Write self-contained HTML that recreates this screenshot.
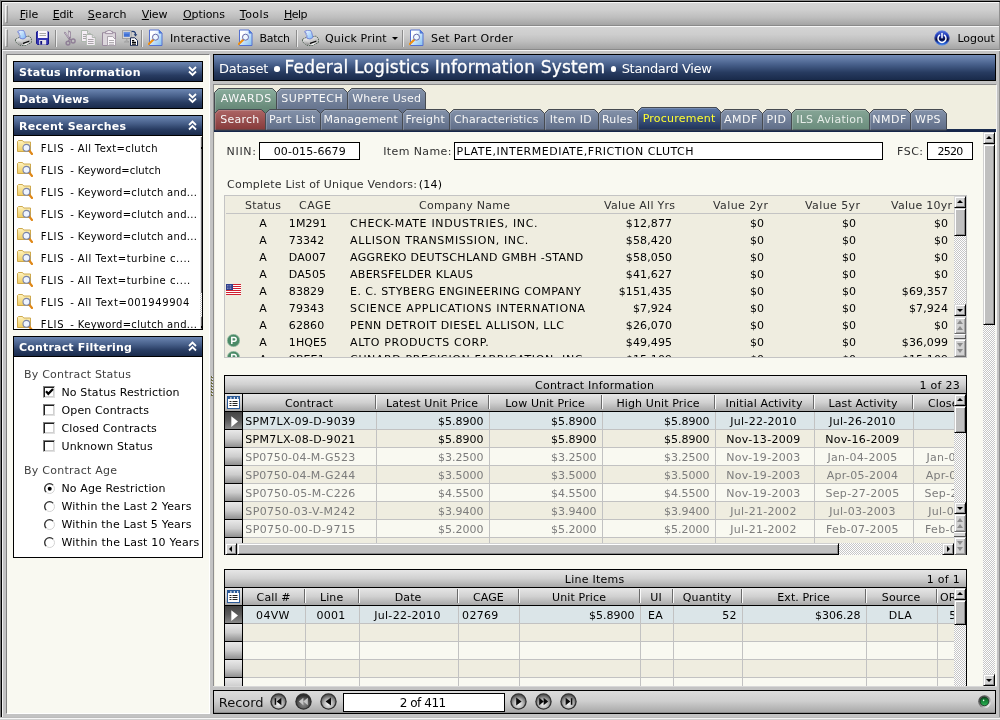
<!DOCTYPE html>
<html><head><meta charset="utf-8"><title>Federal Logistics Information System</title>
<style>

*{box-sizing:border-box;margin:0;padding:0}
html,body{width:1000px;height:720px;overflow:hidden;background:#b9b9b9}
body{font-family:"DejaVu Sans","Liberation Sans",sans-serif;font-size:11px;color:#000;position:relative}
#app,#app div,#app span.t,#app svg{position:absolute}
#app{left:0;top:0;width:1000px;height:720px;overflow:hidden;will-change:transform}
#app span.t{white-space:pre;line-height:1;display:block}
#app div{overflow:hidden}
u{text-decoration:underline;text-underline-offset:1px}
.bar{background:linear-gradient(#d4d4d4,#cdcdcd 35%,#bebebe 65%,#a4a4a4)}
.grip{border-left:1px solid #f2f2f2;border-top:1px solid #f2f2f2;border-right:1px solid #8e8e8e;border-bottom:1px solid #8e8e8e}
.tsep{border-left:1px solid #8c8c8c;border-right:1px solid #ececec}
.ph{border:1px solid #000;background:linear-gradient(#6c86b2,#465e88 40%,#283c62 70%,#1a2b4c)}
.pb{background:#fff;border:1px solid #000;border-top:none}
.nav{border:1px solid #000;background:linear-gradient(#748db8,#455d88 40%,#273b60 70%,#192a4a)}
.dots{background:repeating-conic-gradient(#ffffff 0 25%,#c6c6c6 0 50%) 0 0/2px 2px}
.sbtn{background:#d2d2d2;border-left:1px solid #d8d8d8;border-top:1px solid #d8d8d8;border-right:1px solid #000;border-bottom:1px solid #000;box-shadow:inset 1px 1px 0 #fff,inset -1px -1px 0 #8a8a8a}
.sbtnd{background:#d2d2d2;border-left:1px solid #dcdcdc;border-top:1px solid #dcdcdc;border-right:1px solid #6c6c6c;border-bottom:1px solid #6c6c6c;box-shadow:inset 1px 1px 0 #fff,inset -1px -1px 0 #a4a4a4}
.sthumb{background:#c0c0c0;border-left:1px solid #d0d0d0;border-top:1px solid #d0d0d0;border-right:1px solid #000;border-bottom:1px solid #000;box-shadow:inset 1px 1px 0 #fff,inset -1px -1px 0 #8a8a8a}
.inp{background:#fff;border:1px solid #000}
.ghead{background:linear-gradient(#e6e6e6,#d0d0d0 50%,#a8a8a8)}
.gsel{background:linear-gradient(#e9e9e9,#cdcdcd 50%,#909090)}
.gselx{background:linear-gradient(#444,#5c5c5c 50%,#8a8a8a)}

</style></head><body><div id="app">
<div style="left:0px;top:0px;width:1000px;height:720px;background:#b4b4b4"></div>
<div style="left:0px;top:0px;width:1000px;height:1px;background:#8c8c8c"></div>
<div style="left:0px;top:0px;width:1px;height:720px;background:#7c7c7c"></div>
<div style="left:1px;top:1px;width:999px;height:719px;background:#c3c3c3;border-left:1px solid #000;border-top:1px solid #000"></div>
<div class="bar" style="left:2px;top:2px;width:998px;height:24px;border-top:1px solid #f6f6f6;border-bottom:1px solid #8a8a8a;border-left:1px solid #f0f0f0"></div>
<div class="grip" style="left:5px;top:5px;width:3px;height:18px;"></div>
<span class="t" style="top:9px;left:19.8px;letter-spacing:0.03px;"><u>F</u>ile</span>
<span class="t" style="top:9px;left:52.8px;letter-spacing:-0.27px;"><u>E</u>dit</span>
<span class="t" style="top:9px;left:87.8px;letter-spacing:0.18px;"><u>S</u>earch</span>
<span class="t" style="top:9px;left:141.8px;letter-spacing:-0.14px;"><u>V</u>iew</span>
<span class="t" style="top:9px;left:183.0px;letter-spacing:-0.08px;"><u>O</u>ptions</span>
<span class="t" style="top:9px;left:239.8px;letter-spacing:0.47px;"><u>T</u>ools</span>
<span class="t" style="top:9px;left:284.0px;letter-spacing:-0.53px;"><u>H</u>elp</span>
<div class="bar" style="left:2px;top:26px;width:998px;height:24px;border-top:1px solid #f6f6f6;border-bottom:1px solid #8a8a8a;border-left:1px solid #f0f0f0"></div>
<div class="grip" style="left:5px;top:29px;width:3px;height:18px;"></div>
<div class="tsep" style="left:55px;top:30px;width:2px;height:17px;"></div>
<div class="tsep" style="left:141px;top:30px;width:2px;height:17px;"></div>
<div class="tsep" style="left:296px;top:30px;width:2px;height:17px;"></div>
<div class="tsep" style="left:402px;top:30px;width:2px;height:17px;"></div>
<span class="t" style="top:33px;left:170.0px;letter-spacing:0.12px;">Interactive</span>
<span class="t" style="top:33px;left:259.5px;letter-spacing:-0.31px;">Batch</span>
<span class="t" style="top:33px;left:325.0px;letter-spacing:0.17px;">Quick Print</span>
<span class="t" style="top:33px;left:431.0px;letter-spacing:0.31px;">Set Part Order</span>
<span class="t" style="top:33px;left:957.5px;letter-spacing:-0.07px;">Logout</span>
<div style="left:392px;top:37px;width:6px;height:3px;"><svg width="6" height="3" viewBox="0 0 6 3"><path d="M0 0h6L3 3z" fill="#000"/></svg></div>
<div style="left:999px;top:2px;width:1px;height:715px;background:#909090"></div>
<div style="left:2px;top:50px;width:998px;height:1px;background:#f6f6f6"></div>
<div style="left:2px;top:51px;width:1px;height:666px;background:#f2f2f2"></div>
<div style="left:6px;top:54px;width:204px;height:660px;background:#f9f9f1;border-top:1px solid #808080;border-left:1px solid #808080;border-right:1px solid #fff;border-bottom:1px solid #fff"></div>
<div class="ph" style="left:13px;top:61px;width:190px;height:21px;"></div>
<span class="t" style="top:67px;left:19.0px;letter-spacing:0.26px;color:#fff;font-weight:bold;">Status Information</span>
<svg style="left:188px;top:66px" width="9" height="11" viewBox="0 0 9 11"><path d="M1 1l3.5 3.5L8 1M1 5.5L4.5 9 8 5.5" fill="none" stroke="#fff" stroke-width="1.8"/></svg>
<div class="ph" style="left:13px;top:88px;width:190px;height:21px;"></div>
<span class="t" style="top:94px;left:19.0px;letter-spacing:0.07px;color:#fff;font-weight:bold;">Data Views</span>
<svg style="left:188px;top:93px" width="9" height="11" viewBox="0 0 9 11"><path d="M1 1l3.5 3.5L8 1M1 5.5L4.5 9 8 5.5" fill="none" stroke="#fff" stroke-width="1.8"/></svg>
<div class="ph" style="left:13px;top:115px;width:190px;height:21px;"></div>
<span class="t" style="top:121px;left:19.0px;letter-spacing:0.26px;color:#fff;font-weight:bold;">Recent Searches</span>
<svg style="left:188px;top:120px" width="9" height="11" viewBox="0 0 9 11"><path d="M1 5l3.5-3.5L8 5M1 9.5L4.5 6 8 9.5" fill="none" stroke="#fff" stroke-width="1.8"/></svg>
<div class="pb" style="left:13px;top:136px;width:190px;height:194px;"></div>
<div style="left:14px;top:136px;width:188px;height:193px;">
<span class="t" style="top:8px;left:26.8px;font-size:10px;letter-spacing:0.69px;">FLIS</span>
<span class="t" style="top:8px;left:56.3px;font-size:10px;">-</span>
<span class="t" style="top:8px;left:63.8px;font-size:10px;letter-spacing:0.37px;">All Text=clutch</span>
<span class="t" style="top:30px;left:26.8px;font-size:10px;letter-spacing:0.69px;">FLIS</span>
<span class="t" style="top:30px;left:56.3px;font-size:10px;">-</span>
<span class="t" style="top:30px;left:63.8px;font-size:10px;letter-spacing:0.12px;">Keyword=clutch</span>
<span class="t" style="top:52px;left:26.8px;font-size:10px;letter-spacing:0.69px;">FLIS</span>
<span class="t" style="top:52px;left:56.3px;font-size:10px;">-</span>
<span class="t" style="top:52px;left:63.8px;font-size:10px;letter-spacing:0.31px;">Keyword=clutch and...</span>
<span class="t" style="top:74px;left:26.8px;font-size:10px;letter-spacing:0.69px;">FLIS</span>
<span class="t" style="top:74px;left:56.3px;font-size:10px;">-</span>
<span class="t" style="top:74px;left:63.8px;font-size:10px;letter-spacing:0.31px;">Keyword=clutch and...</span>
<span class="t" style="top:96px;left:26.8px;font-size:10px;letter-spacing:0.69px;">FLIS</span>
<span class="t" style="top:96px;left:56.3px;font-size:10px;">-</span>
<span class="t" style="top:96px;left:63.8px;font-size:10px;letter-spacing:0.31px;">Keyword=clutch and...</span>
<span class="t" style="top:118px;left:26.8px;font-size:10px;letter-spacing:0.69px;">FLIS</span>
<span class="t" style="top:118px;left:56.3px;font-size:10px;">-</span>
<span class="t" style="top:118px;left:63.8px;font-size:10px;letter-spacing:0.52px;">All Text=turbine c....</span>
<span class="t" style="top:140px;left:26.8px;font-size:10px;letter-spacing:0.69px;">FLIS</span>
<span class="t" style="top:140px;left:56.3px;font-size:10px;">-</span>
<span class="t" style="top:140px;left:63.8px;font-size:10px;letter-spacing:0.52px;">All Text=turbine c....</span>
<span class="t" style="top:162px;left:26.8px;font-size:10px;letter-spacing:0.69px;">FLIS</span>
<span class="t" style="top:162px;left:56.3px;font-size:10px;">-</span>
<span class="t" style="top:162px;left:63.8px;font-size:10px;letter-spacing:0.6px;">All Text=001949904</span>
<span class="t" style="top:184px;left:26.8px;font-size:10px;letter-spacing:0.69px;">FLIS</span>
<span class="t" style="top:184px;left:56.3px;font-size:10px;">-</span>
<span class="t" style="top:184px;left:63.8px;font-size:10px;letter-spacing:0.31px;">Keyword=clutch and...</span>
</div>
<div style="left:200px;top:137px;width:1px;height:156px;background:#e4e4e4"></div>
<div style="left:201px;top:137px;width:1px;height:156px;background:#6c6c6c"></div>
<div class="dots" style="left:200px;top:293px;width:2px;height:24px;"></div>
<div style="left:200px;top:317px;width:1px;height:12px;background:#e4e4e4"></div>
<div style="left:201px;top:317px;width:1px;height:12px;background:#6c6c6c"></div>
<div style="left:201px;top:147px;width:1px;height:2px;background:#000"></div>
<div style="left:201px;top:326px;width:1px;height:2px;background:#000"></div>
<div class="ph" style="left:13px;top:336px;width:190px;height:21px;"></div>
<span class="t" style="top:342px;left:19.0px;letter-spacing:0.18px;color:#fff;font-weight:bold;">Contract Filtering</span>
<svg style="left:188px;top:341px" width="9" height="11" viewBox="0 0 9 11"><path d="M1 5l3.5-3.5L8 5M1 9.5L4.5 6 8 9.5" fill="none" stroke="#fff" stroke-width="1.8"/></svg>
<div class="pb" style="left:13px;top:357px;width:190px;height:201px;"></div>
<span class="t" style="top:369px;left:24.0px;letter-spacing:0.21px;color:#404040;">By Contract Status</span>
<span class="t" style="top:387px;left:61.5px;letter-spacing:0.12px;">No Status Restriction</span>
<div style="left:43px;top:386px;width:12px;height:12px;background:#fff;border-left:1px solid #808080;border-top:1px solid #808080;border-right:1px solid #e0e0e0;border-bottom:1px solid #e0e0e0;box-shadow:inset 1px 1px 0 #202020,inset -1px -1px 0 #d0d0d0"></div>
<span class="t" style="top:405px;left:61.5px;letter-spacing:0.12px;">Open Contracts</span>
<div style="left:43px;top:404px;width:12px;height:12px;background:#fff;border-left:1px solid #808080;border-top:1px solid #808080;border-right:1px solid #e0e0e0;border-bottom:1px solid #e0e0e0;box-shadow:inset 1px 1px 0 #202020,inset -1px -1px 0 #d0d0d0"></div>
<span class="t" style="top:423px;left:61.5px;letter-spacing:0.12px;">Closed Contracts</span>
<div style="left:43px;top:422px;width:12px;height:12px;background:#fff;border-left:1px solid #808080;border-top:1px solid #808080;border-right:1px solid #e0e0e0;border-bottom:1px solid #e0e0e0;box-shadow:inset 1px 1px 0 #202020,inset -1px -1px 0 #d0d0d0"></div>
<span class="t" style="top:441px;left:61.5px;letter-spacing:0.12px;">Unknown Status</span>
<div style="left:43px;top:440px;width:12px;height:12px;background:#fff;border-left:1px solid #808080;border-top:1px solid #808080;border-right:1px solid #e0e0e0;border-bottom:1px solid #e0e0e0;box-shadow:inset 1px 1px 0 #202020,inset -1px -1px 0 #d0d0d0"></div>
<span class="t" style="top:465px;left:24.0px;letter-spacing:0.24px;color:#404040;">By Contract Age</span>
<span class="t" style="top:483px;left:61.5px;letter-spacing:0.12px;">No Age Restriction</span>
<span class="t" style="top:501px;left:61.5px;letter-spacing:0.18px;">Within the Last 2 Years</span>
<span class="t" style="top:519px;left:61.5px;letter-spacing:0.18px;">Within the Last 5 Years</span>
<span class="t" style="top:537px;left:61.5px;letter-spacing:0.21px;">Within the Last 10 Years</span>
<div class="nav" style="left:213px;top:54px;width:783px;height:27px;"></div>
<span class="t" style="top:62px;left:219.0px;font-size:13px;letter-spacing:-0.24px;color:#fff;">Dataset</span>
<span class="t" style="top:59px;left:284.5px;font-size:17px;letter-spacing:0.18px;color:#fff;-webkit-text-stroke:0.3px #fff;">Federal Logistics Information System</span>
<span class="t" style="top:62px;left:621.7px;font-size:13px;letter-spacing:-0.33px;color:#fff;">Standard View</span>
<div style="left:274px;top:66px;width:5.5px;height:5.5px;background:#fff;border-radius:50%"></div>
<div style="left:610.8px;top:66px;width:5.5px;height:5.5px;background:#fff;border-radius:50%"></div>
<div style="left:213px;top:84px;width:784px;height:603px;background:#f0eee0;border-top:1px solid #8a8a8a;border-left:1px solid #8e8e8e;border-right:1px solid #f4f4f4"></div>
<div style="left:212px;top:376px;width:1px;height:1px;background:#e4e4ff"></div>
<div style="left:211px;top:376px;width:1px;height:2px;background:#6c6c3c"></div>
<div style="left:212px;top:377px;width:1px;height:1px;background:#6c6c3c"></div>
<div style="left:212px;top:379px;width:1px;height:1px;background:#e4e4ff"></div>
<div style="left:211px;top:379px;width:1px;height:2px;background:#6c6c3c"></div>
<div style="left:212px;top:380px;width:1px;height:1px;background:#6c6c3c"></div>
<div style="left:212px;top:382px;width:1px;height:1px;background:#e4e4ff"></div>
<div style="left:211px;top:382px;width:1px;height:2px;background:#6c6c3c"></div>
<div style="left:212px;top:383px;width:1px;height:1px;background:#6c6c3c"></div>
<div style="left:212px;top:385px;width:1px;height:1px;background:#e4e4ff"></div>
<div style="left:211px;top:385px;width:1px;height:2px;background:#6c6c3c"></div>
<div style="left:212px;top:386px;width:1px;height:1px;background:#6c6c3c"></div>
<div style="left:212px;top:388px;width:1px;height:1px;background:#e4e4ff"></div>
<div style="left:211px;top:388px;width:1px;height:2px;background:#6c6c3c"></div>
<div style="left:212px;top:389px;width:1px;height:1px;background:#6c6c3c"></div>
<div style="left:212px;top:391px;width:1px;height:1px;background:#e4e4ff"></div>
<div style="left:211px;top:391px;width:1px;height:2px;background:#6c6c3c"></div>
<div style="left:212px;top:392px;width:1px;height:1px;background:#6c6c3c"></div>
<div style="left:212px;top:394px;width:1px;height:1px;background:#e4e4ff"></div>
<div style="left:211px;top:394px;width:1px;height:2px;background:#6c6c3c"></div>
<div style="left:212px;top:395px;width:1px;height:1px;background:#6c6c3c"></div>
<div style="left:215px;top:131px;width:768px;height:555px;background:#f9f9f1"></div>
<div style="left:214px;top:129px;width:782px;height:3px;background:#1b2d50"></div>
<div style="left:214px;top:130px;width:782px;height:2px;background:#16264a"></div>
<svg style="left:0;top:0" width="1000" height="132" viewBox="0 0 1000 132"><defs><linearGradient id="tgb" x1="0" y1="0" x2="0" y2="1"><stop offset="0" stop-color="#8593aa"/><stop offset="1" stop-color="#5f6d88"/></linearGradient><linearGradient id="tgg" x1="0" y1="0" x2="0" y2="1"><stop offset="0" stop-color="#8bae9e"/><stop offset="1" stop-color="#5d7f6e"/></linearGradient><linearGradient id="tgr" x1="0" y1="0" x2="0" y2="1"><stop offset="0" stop-color="#ad6666"/><stop offset="1" stop-color="#863a3a"/></linearGradient><linearGradient id="tgn" x1="0" y1="0" x2="0" y2="1"><stop offset="0" stop-color="#5c78a8"/><stop offset="1" stop-color="#1e3157"/></linearGradient><linearGradient id="tgg2" x1="0" y1="0" x2="0" y2="1"><stop offset="0" stop-color="#86a596"/><stop offset="1" stop-color="#6a8c7c"/></linearGradient></defs><polygon points="347.5,114 347.5,92.5 351.5,88.5 421.5,88.5 425.5,92.5 425.5,114" fill="url(#tgb)" stroke="#464a50" stroke-width="1"/><polyline points="348.5,114 348.5,93 352,89.5 421,89.5" fill="none" stroke="rgba(255,255,255,.18)" stroke-width="1"/><polygon points="276.5,114 276.5,92.5 280.5,88.5 343.5,88.5 347.5,92.5 347.5,114" fill="url(#tgb)" stroke="#464a50" stroke-width="1"/><polyline points="277.5,114 277.5,93 281,89.5 343,89.5" fill="none" stroke="rgba(255,255,255,.18)" stroke-width="1"/><polygon points="214.5,114 214.5,92.5 218.5,88.5 272.5,88.5 276.5,92.5 276.5,114" fill="url(#tgg)" stroke="#464a50" stroke-width="1"/><polyline points="215.5,114 215.5,93 219,89.5 272,89.5" fill="none" stroke="rgba(255,255,255,.18)" stroke-width="1"/><polygon points="214.5,130 214.5,113.5 218.5,109.5 261.5,109.5 265.5,113.5 265.5,130" fill="url(#tgr)" stroke="#464a50" stroke-width="1"/><polyline points="215.5,130 215.5,114 219,110.5 261,110.5" fill="none" stroke="rgba(255,255,255,.18)" stroke-width="1"/><polygon points="265.5,130 265.5,113.5 269.5,109.5 316.5,109.5 320.5,113.5 320.5,130" fill="url(#tgb)" stroke="#464a50" stroke-width="1"/><polyline points="266.5,130 266.5,114 270,110.5 316,110.5" fill="none" stroke="rgba(255,255,255,.18)" stroke-width="1"/><polygon points="320.5,130 320.5,113.5 324.5,109.5 398.5,109.5 402.5,113.5 402.5,130" fill="url(#tgb)" stroke="#464a50" stroke-width="1"/><polyline points="321.5,130 321.5,114 325,110.5 398,110.5" fill="none" stroke="rgba(255,255,255,.18)" stroke-width="1"/><polygon points="402.5,130 402.5,113.5 406.5,109.5 445.5,109.5 449.5,113.5 449.5,130" fill="url(#tgb)" stroke="#464a50" stroke-width="1"/><polyline points="403.5,130 403.5,114 407,110.5 445,110.5" fill="none" stroke="rgba(255,255,255,.18)" stroke-width="1"/><polygon points="449.5,130 449.5,113.5 453.5,109.5 540.5,109.5 544.5,113.5 544.5,130" fill="url(#tgb)" stroke="#464a50" stroke-width="1"/><polyline points="450.5,130 450.5,114 454,110.5 540,110.5" fill="none" stroke="rgba(255,255,255,.18)" stroke-width="1"/><polygon points="544.5,130 544.5,113.5 548.5,109.5 594.5,109.5 598.5,113.5 598.5,130" fill="url(#tgb)" stroke="#464a50" stroke-width="1"/><polyline points="545.5,130 545.5,114 549,110.5 594,110.5" fill="none" stroke="rgba(255,255,255,.18)" stroke-width="1"/><polygon points="598.5,130 598.5,113.5 602.5,109.5 633.5,109.5 637.5,113.5 637.5,130" fill="url(#tgb)" stroke="#464a50" stroke-width="1"/><polyline points="599.5,130 599.5,114 603,110.5 633,110.5" fill="none" stroke="rgba(255,255,255,.18)" stroke-width="1"/><polygon points="720.5,130 720.5,113.5 724.5,109.5 758.5,109.5 762.5,113.5 762.5,130" fill="url(#tgb)" stroke="#464a50" stroke-width="1"/><polyline points="721.5,130 721.5,114 725,110.5 758,110.5" fill="none" stroke="rgba(255,255,255,.18)" stroke-width="1"/><polygon points="762.5,130 762.5,113.5 766.5,109.5 787.5,109.5 791.5,113.5 791.5,130" fill="url(#tgb)" stroke="#464a50" stroke-width="1"/><polyline points="763.5,130 763.5,114 767,110.5 787,110.5" fill="none" stroke="rgba(255,255,255,.18)" stroke-width="1"/><polygon points="791.5,130 791.5,113.5 795.5,109.5 865.5,109.5 869.5,113.5 869.5,130" fill="url(#tgg2)" stroke="#464a50" stroke-width="1"/><polyline points="792.5,130 792.5,114 796,110.5 865,110.5" fill="none" stroke="rgba(255,255,255,.18)" stroke-width="1"/><polygon points="869.5,130 869.5,113.5 873.5,109.5 906.5,109.5 910.5,113.5 910.5,130" fill="url(#tgb)" stroke="#464a50" stroke-width="1"/><polyline points="870.5,130 870.5,114 874,110.5 906,110.5" fill="none" stroke="rgba(255,255,255,.18)" stroke-width="1"/><polygon points="910.5,130 910.5,113.5 914.5,109.5 942.5,109.5 946.5,113.5 946.5,130" fill="url(#tgb)" stroke="#464a50" stroke-width="1"/><polyline points="911.5,130 911.5,114 915,110.5 942,110.5" fill="none" stroke="rgba(255,255,255,.18)" stroke-width="1"/><polygon points="637.5,130 637.5,111.5 641.5,107.5 716.5,107.5 720.5,111.5 720.5,130" fill="url(#tgn)" stroke="#464a50" stroke-width="1"/><polyline points="638.5,130 638.5,112 642,108.5 716,108.5" fill="none" stroke="rgba(255,255,255,.18)" stroke-width="1"/></svg>
<span class="t" style="top:93px;left:220.8px;letter-spacing:0.5px;color:#f8f8f8;">AWARDS</span>
<span class="t" style="top:93px;left:281.3px;letter-spacing:0.5px;color:#f8f8f8;">SUPPTECH</span>
<span class="t" style="top:93px;left:352.2px;letter-spacing:0.22px;color:#f8f8f8;">Where Used</span>
<span class="t" style="top:114px;left:220.3px;letter-spacing:0.21px;color:#f8f8f8;">Search</span>
<span class="t" style="top:114px;left:269.1px;letter-spacing:0.23px;color:#f8f8f8;">Part List</span>
<span class="t" style="top:114px;left:323.6px;letter-spacing:0.19px;color:#f8f8f8;">Management</span>
<span class="t" style="top:114px;left:405.6px;letter-spacing:0.2px;color:#f8f8f8;">Freight</span>
<span class="t" style="top:114px;left:453.9px;letter-spacing:0.17px;color:#f8f8f8;">Characteristics</span>
<span class="t" style="top:114px;left:549.7px;letter-spacing:0.3px;color:#f8f8f8;">Item ID</span>
<span class="t" style="top:114px;left:601.9px;letter-spacing:0.22px;color:#f8f8f8;">Rules</span>
<span class="t" style="top:113px;left:642.7px;letter-spacing:0.23px;color:#ffff30;">Procurement</span>
<span class="t" style="top:114px;left:724.0px;letter-spacing:0.5px;color:#f8f8f8;">AMDF</span>
<span class="t" style="top:114px;left:766.5px;letter-spacing:0.5px;color:#f8f8f8;">PID</span>
<span class="t" style="top:114px;left:796.2px;letter-spacing:0.27px;color:#e6ede8;">ILS Aviation</span>
<span class="t" style="top:114px;left:872.2px;letter-spacing:0.5px;color:#f8f8f8;">NMDF</span>
<span class="t" style="top:114px;left:915.0px;letter-spacing:0.5px;color:#f8f8f8;">WPS</span>
<span class="t" style="top:146px;left:226.5px;letter-spacing:0.71px;color:#303030;">NIIN:</span>
<div class="inp" style="left:259px;top:142px;width:101px;height:18px;"></div>
<span class="t" style="top:146px;left:273.7px;letter-spacing:0.11px;">00-015-6679</span>
<span class="t" style="top:146px;left:383.2px;letter-spacing:0.4px;color:#303030;">Item Name:</span>
<div class="inp" style="left:454px;top:142px;width:429px;height:18px;"></div>
<span class="t" style="top:146px;left:456.5px;letter-spacing:0.51px;">PLATE,INTERMEDIATE,FRICTION CLUTCH</span>
<span class="t" style="top:146px;left:897.1px;letter-spacing:0.49px;color:#303030;">FSC:</span>
<div class="inp" style="left:927px;top:142px;width:46px;height:18px;"></div>
<span class="t" style="top:146px;left:937.6px;letter-spacing:-0.8px;">2520</span>
<span class="t" style="top:179px;left:227.1px;letter-spacing:0.2px;color:#303030;">Complete List of Unique Vendors:</span>
<span class="t" style="top:179px;left:418.7px;letter-spacing:0.27px;">(14)</span>
<div style="left:224px;top:195px;width:743px;height:163px;background:#efede0;border:1px solid #c4c4c4"></div>
<div style="left:226px;top:213px;width:728px;height:1px;background:#c4c4c4"></div>
<span class="t" style="top:200px;left:245.0px;letter-spacing:0.19px;color:#303030;">Status</span>
<span class="t" style="top:200px;left:299.0px;letter-spacing:0.5px;color:#303030;">CAGE</span>
<span class="t" style="top:200px;left:419.0px;letter-spacing:0.25px;color:#303030;">Company Name</span>
<span class="t" style="top:200px;left:604.0px;letter-spacing:0.27px;color:#303030;">Value All Yrs</span>
<span class="t" style="top:200px;left:713.0px;letter-spacing:0.41px;color:#303030;">Value 2yr</span>
<span class="t" style="top:200px;left:805.0px;letter-spacing:0.41px;color:#303030;">Value 5yr</span>
<span class="t" style="top:200px;left:891.0px;letter-spacing:0.25px;color:#303030;">Value 10yr</span>
<div style="left:226px;top:214px;width:728px;height:143px">
<span class="t" style="top:4px;left:33.2px;">A</span>
<span class="t" style="top:4px;left:62.8px;letter-spacing:0.1px;">1M291</span>
<span class="t" style="top:4px;left:124.1px;letter-spacing:0.67px;width:234.5px;overflow:hidden;">CHECK-MATE INDUSTRIES, INC.</span>
<span class="t" style="top:4px;left:399.8px;letter-spacing:0.12px;">$12,877</span>
<span class="t" style="top:4px;left:524px;">$0</span>
<span class="t" style="top:4px;left:616px;">$0</span>
<span class="t" style="top:4px;left:708px;">$0</span>
<span class="t" style="top:21px;left:33.2px;">A</span>
<span class="t" style="top:21px;left:62.8px;letter-spacing:0.1px;">73342</span>
<span class="t" style="top:21px;left:124.1px;letter-spacing:0.59px;width:234.5px;overflow:hidden;">ALLISON TRANSMISSION, INC.</span>
<span class="t" style="top:21px;left:399.8px;letter-spacing:0.12px;">$58,420</span>
<span class="t" style="top:21px;left:524px;">$0</span>
<span class="t" style="top:21px;left:616px;">$0</span>
<span class="t" style="top:21px;left:708px;">$0</span>
<span class="t" style="top:38px;left:33.2px;">A</span>
<span class="t" style="top:38px;left:62.8px;letter-spacing:0.1px;">DA007</span>
<span class="t" style="top:38px;left:124.1px;letter-spacing:0.33px;width:234.5px;overflow:hidden;">AGGREKO DEUTSCHLAND GMBH -STAND</span>
<span class="t" style="top:38px;left:399.8px;letter-spacing:0.12px;">$58,050</span>
<span class="t" style="top:38px;left:524px;">$0</span>
<span class="t" style="top:38px;left:616px;">$0</span>
<span class="t" style="top:38px;left:708px;">$0</span>
<span class="t" style="top:55px;left:33.2px;">A</span>
<span class="t" style="top:55px;left:62.8px;letter-spacing:0.1px;">DA505</span>
<span class="t" style="top:55px;left:124.1px;letter-spacing:0.25px;width:234.5px;overflow:hidden;">ABERSFELDER KLAUS</span>
<span class="t" style="top:55px;left:399.8px;letter-spacing:0.12px;">$41,627</span>
<span class="t" style="top:55px;left:524px;">$0</span>
<span class="t" style="top:55px;left:616px;">$0</span>
<span class="t" style="top:55px;left:708px;">$0</span>
<span class="t" style="top:72px;left:33.2px;">A</span>
<span class="t" style="top:72px;left:62.8px;letter-spacing:0.1px;">83829</span>
<span class="t" style="top:72px;left:124.1px;letter-spacing:0.41px;width:234.5px;overflow:hidden;">E. C. STYBERG ENGINEERING COMPANY</span>
<span class="t" style="top:72px;left:392.7px;letter-spacing:0.12px;">$151,435</span>
<span class="t" style="top:72px;left:524px;">$0</span>
<span class="t" style="top:72px;left:616px;">$0</span>
<span class="t" style="top:72px;left:675.8px;letter-spacing:0.12px;">$69,357</span>
<span class="t" style="top:89px;left:33.2px;">A</span>
<span class="t" style="top:89px;left:62.8px;letter-spacing:0.1px;">79343</span>
<span class="t" style="top:89px;left:124.1px;letter-spacing:0.62px;width:234.5px;overflow:hidden;">SCIENCE APPLICATIONS INTERNATIONAL</span>
<span class="t" style="top:89px;left:406.9px;letter-spacing:0.12px;">$7,924</span>
<span class="t" style="top:89px;left:524px;">$0</span>
<span class="t" style="top:89px;left:616px;">$0</span>
<span class="t" style="top:89px;left:682.9px;letter-spacing:0.12px;">$7,924</span>
<span class="t" style="top:106px;left:33.2px;">A</span>
<span class="t" style="top:106px;left:62.8px;letter-spacing:0.1px;">62860</span>
<span class="t" style="top:106px;left:124.1px;letter-spacing:0.4px;width:234.5px;overflow:hidden;">PENN DETROIT DIESEL ALLISON, LLC</span>
<span class="t" style="top:106px;left:399.8px;letter-spacing:0.12px;">$26,070</span>
<span class="t" style="top:106px;left:524px;">$0</span>
<span class="t" style="top:106px;left:616px;">$0</span>
<span class="t" style="top:106px;left:708px;">$0</span>
<span class="t" style="top:123px;left:33.2px;">A</span>
<span class="t" style="top:123px;left:62.8px;letter-spacing:0.1px;">1HQE5</span>
<span class="t" style="top:123px;left:124.1px;letter-spacing:0.61px;width:234.5px;overflow:hidden;">ALTO PRODUCTS CORP.</span>
<span class="t" style="top:123px;left:399.8px;letter-spacing:0.12px;">$49,495</span>
<span class="t" style="top:123px;left:524px;">$0</span>
<span class="t" style="top:123px;left:616px;">$0</span>
<span class="t" style="top:123px;left:675.8px;letter-spacing:0.12px;">$36,099</span>
<span class="t" style="top:140px;left:33.2px;">A</span>
<span class="t" style="top:140px;left:62.8px;letter-spacing:0.1px;">9BEE1</span>
<span class="t" style="top:140px;left:124.1px;letter-spacing:0.62px;width:234.5px;overflow:hidden;">CUNARD PRECISION FABRICATION, INC.</span>
<span class="t" style="top:140px;left:399.8px;letter-spacing:0.12px;">$15,109</span>
<span class="t" style="top:140px;left:524px;">$0</span>
<span class="t" style="top:140px;left:616px;">$0</span>
<span class="t" style="top:140px;left:675.8px;letter-spacing:0.12px;">$15,109</span>
</div>
<div style="left:224px;top:375px;width:743px;height:180px;background:#000"></div>
<div class="ghead" style="left:225px;top:376px;width:741px;height:17px;"></div>
<span class="t" style="top:380px;left:535.0px;letter-spacing:0.24px;">Contract Information</span>
<span class="t" style="top:380px;left:919.4px;letter-spacing:0.3px;">1 of 23</span>
<div class="ghead" style="left:225px;top:394px;width:741px;height:17px;"></div>
<div class="ghead" style="left:225px;top:394px;width:17px;height:17px;"></div>
<svg style="left:227px;top:396px" width="13" height="13" viewBox="0 0 13 13"><rect x=".5" y=".5" width="12" height="12" fill="#fff" stroke="#2a5a98"/><path d="M1 2h11" stroke="#2a5a98" stroke-width="2" stroke-dasharray="2.4 1"/><path d="M2.5 5.5h2M2.5 7.5h2M2.5 9.5h2" stroke="#222" stroke-width="1"/><path d="M5.5 5.5h5M5.5 7.5h5M5.5 9.5h5" stroke="#222" stroke-width="1.2"/></svg>
<div style="left:242px;top:394px;width:1px;height:17px;background:#000"></div>
<div style="left:225px;top:412px;width:729px;height:131px;background:#f9f9f1">
<div style="left:18px;top:0px;width:711px;height:17px;background:#dbe5e8"></div>
<div style="left:18px;top:17px;width:711px;height:1px;background:#c2c2c2"></div>
<div class="gselx" style="left:0px;top:0px;width:17px;height:17px;"></div>
<div style="left:0px;top:17px;width:17px;height:1px;background:#000"></div>
<svg style="left:5.5px;top:3.5px" width="8" height="12" viewBox="0 0 8 12"><path d="M0.3 0.3L7 5.6L0.3 11z" fill="#fff"/></svg>
<div style="left:18px;top:18px;width:711px;height:17px;background:#efede0"></div>
<div style="left:18px;top:35px;width:711px;height:1px;background:#c2c2c2"></div>
<div class="gsel" style="left:0px;top:18px;width:17px;height:17px;"></div>
<div style="left:0px;top:35px;width:17px;height:1px;background:#000"></div>
<div style="left:18px;top:36px;width:711px;height:17px;background:#f9f9f1"></div>
<div style="left:18px;top:53px;width:711px;height:1px;background:#c2c2c2"></div>
<div class="gsel" style="left:0px;top:36px;width:17px;height:17px;"></div>
<div style="left:0px;top:53px;width:17px;height:1px;background:#000"></div>
<div style="left:18px;top:54px;width:711px;height:17px;background:#efede0"></div>
<div style="left:18px;top:71px;width:711px;height:1px;background:#c2c2c2"></div>
<div class="gsel" style="left:0px;top:54px;width:17px;height:17px;"></div>
<div style="left:0px;top:71px;width:17px;height:1px;background:#000"></div>
<div style="left:18px;top:72px;width:711px;height:17px;background:#f9f9f1"></div>
<div style="left:18px;top:89px;width:711px;height:1px;background:#c2c2c2"></div>
<div class="gsel" style="left:0px;top:72px;width:17px;height:17px;"></div>
<div style="left:0px;top:89px;width:17px;height:1px;background:#000"></div>
<div style="left:18px;top:90px;width:711px;height:17px;background:#efede0"></div>
<div style="left:18px;top:107px;width:711px;height:1px;background:#c2c2c2"></div>
<div class="gsel" style="left:0px;top:90px;width:17px;height:17px;"></div>
<div style="left:0px;top:107px;width:17px;height:1px;background:#000"></div>
<div style="left:18px;top:108px;width:711px;height:17px;background:#f9f9f1"></div>
<div style="left:18px;top:125px;width:711px;height:1px;background:#c2c2c2"></div>
<div class="gsel" style="left:0px;top:108px;width:17px;height:17px;"></div>
<div style="left:0px;top:125px;width:17px;height:1px;background:#000"></div>
<div style="left:18px;top:126px;width:711px;height:17px;background:#efede0"></div>
<div style="left:18px;top:143px;width:711px;height:1px;background:#c2c2c2"></div>
<div class="gsel" style="left:0px;top:126px;width:17px;height:17px;"></div>
<div style="left:0px;top:143px;width:17px;height:1px;background:#000"></div>
<div style="left:17px;top:0px;width:1px;height:131px;background:#000"></div>
<div style="left:151px;top:0px;width:1px;height:131px;background:#c2c2c2"></div>
<div style="left:264px;top:0px;width:1px;height:131px;background:#c2c2c2"></div>
<div style="left:377px;top:0px;width:1px;height:131px;background:#c2c2c2"></div>
<div style="left:490px;top:0px;width:1px;height:131px;background:#c2c2c2"></div>
<div style="left:589px;top:0px;width:1px;height:131px;background:#c2c2c2"></div>
<div style="left:688px;top:0px;width:1px;height:131px;background:#c2c2c2"></div>
<div style="left:787px;top:0px;width:1px;height:131px;background:#c2c2c2"></div>
</div>
<div style="left:243px;top:394px;width:711px;height:17px">
<div style="left:132px;top:1px;width:1px;height:14px;background:#6a6a6a"></div>
<div style="left:133px;top:1px;width:1px;height:14px;background:#fafafa"></div>
<span class="t" style="top:4px;left:41.9px;letter-spacing:0.12px;">Contract</span>
<div style="left:245px;top:1px;width:1px;height:14px;background:#6a6a6a"></div>
<div style="left:246px;top:1px;width:1px;height:14px;background:#fafafa"></div>
<span class="t" style="top:4px;left:142.9px;letter-spacing:0.12px;">Latest Unit Price</span>
<div style="left:358px;top:1px;width:1px;height:14px;background:#6a6a6a"></div>
<div style="left:359px;top:1px;width:1px;height:14px;background:#fafafa"></div>
<span class="t" style="top:4px;left:262.3px;letter-spacing:0.12px;">Low Unit Price</span>
<div style="left:471px;top:1px;width:1px;height:14px;background:#6a6a6a"></div>
<div style="left:472px;top:1px;width:1px;height:14px;background:#fafafa"></div>
<span class="t" style="top:4px;left:373.4px;letter-spacing:0.12px;">High Unit Price</span>
<div style="left:570px;top:1px;width:1px;height:14px;background:#6a6a6a"></div>
<div style="left:571px;top:1px;width:1px;height:14px;background:#fafafa"></div>
<span class="t" style="top:4px;left:482.6px;letter-spacing:0.12px;">Initial Activity</span>
<div style="left:669px;top:1px;width:1px;height:14px;background:#6a6a6a"></div>
<div style="left:670px;top:1px;width:1px;height:14px;background:#fafafa"></div>
<span class="t" style="top:4px;left:585.5px;letter-spacing:0.12px;">Last Activity</span>
<span class="t" style="top:4px;left:685.0px;letter-spacing:0.12px;">Closed Date</span>
</div>
<div style="left:243px;top:412px;width:711px;height:131px">
<span class="t" style="top:4px;left:2.3px;letter-spacing:0.29px;color:#000;">SPM7LX-09-D-9039</span>
<span class="t" style="top:4px;left:195.0px;color:#000;">$5.8900</span>
<span class="t" style="top:4px;left:308.0px;color:#000;">$5.8900</span>
<span class="t" style="top:4px;left:421.0px;color:#000;">$5.8900</span>
<span class="t" style="top:4px;left:487.2px;letter-spacing:0.3px;color:#000;">Jul-22-2010</span>
<span class="t" style="top:4px;left:586.2px;letter-spacing:0.3px;color:#000;">Jul-26-2010</span>
<span class="t" style="top:22px;left:2.3px;letter-spacing:0.29px;color:#000;">SPM7LX-08-D-9021</span>
<span class="t" style="top:22px;left:195.0px;color:#000;">$5.8900</span>
<span class="t" style="top:22px;left:308.0px;color:#000;">$5.8900</span>
<span class="t" style="top:22px;left:421.0px;color:#000;">$5.8900</span>
<span class="t" style="top:22px;left:483.2px;letter-spacing:0.3px;color:#000;">Nov-13-2009</span>
<span class="t" style="top:22px;left:582.2px;letter-spacing:0.3px;color:#000;">Nov-16-2009</span>
<span class="t" style="top:40px;left:2.3px;letter-spacing:0.2px;color:#7c7c7c;">SP0750-04-M-G523</span>
<span class="t" style="top:40px;left:195.0px;color:#7c7c7c;">$3.2500</span>
<span class="t" style="top:40px;left:308.0px;color:#7c7c7c;">$3.2500</span>
<span class="t" style="top:40px;left:421.0px;color:#7c7c7c;">$3.2500</span>
<span class="t" style="top:40px;left:483.2px;letter-spacing:0.3px;color:#7c7c7c;">Nov-19-2003</span>
<span class="t" style="top:40px;left:584.4px;letter-spacing:0.3px;color:#7c7c7c;">Jan-04-2005</span>
<span class="t" style="top:40px;left:683.4px;letter-spacing:0.3px;color:#7c7c7c;">Jan-04-2005</span>
<span class="t" style="top:58px;left:2.3px;letter-spacing:0.2px;color:#7c7c7c;">SP0750-04-M-G244</span>
<span class="t" style="top:58px;left:195.0px;color:#7c7c7c;">$3.5000</span>
<span class="t" style="top:58px;left:308.0px;color:#7c7c7c;">$3.5000</span>
<span class="t" style="top:58px;left:421.0px;color:#7c7c7c;">$3.5000</span>
<span class="t" style="top:58px;left:483.2px;letter-spacing:0.3px;color:#7c7c7c;">Nov-19-2003</span>
<span class="t" style="top:58px;left:583.7px;letter-spacing:0.3px;color:#7c7c7c;">Apr-05-2004</span>
<span class="t" style="top:58px;left:682.7px;letter-spacing:0.3px;color:#7c7c7c;">Apr-05-2004</span>
<span class="t" style="top:76px;left:2.3px;letter-spacing:0.29px;color:#7c7c7c;">SP0750-05-M-C226</span>
<span class="t" style="top:76px;left:195.0px;color:#7c7c7c;">$4.5500</span>
<span class="t" style="top:76px;left:308.0px;color:#7c7c7c;">$4.5500</span>
<span class="t" style="top:76px;left:421.0px;color:#7c7c7c;">$4.5500</span>
<span class="t" style="top:76px;left:483.2px;letter-spacing:0.3px;color:#7c7c7c;">Nov-19-2003</span>
<span class="t" style="top:76px;left:582.5px;letter-spacing:0.3px;color:#7c7c7c;">Sep-27-2005</span>
<span class="t" style="top:76px;left:681.5px;letter-spacing:0.3px;color:#7c7c7c;">Sep-27-2005</span>
<span class="t" style="top:94px;left:2.3px;letter-spacing:0.38px;color:#7c7c7c;">SP0750-03-V-M242</span>
<span class="t" style="top:94px;left:195.0px;color:#7c7c7c;">$3.9400</span>
<span class="t" style="top:94px;left:308.0px;color:#7c7c7c;">$3.9400</span>
<span class="t" style="top:94px;left:421.0px;color:#7c7c7c;">$3.9400</span>
<span class="t" style="top:94px;left:487.2px;letter-spacing:0.3px;color:#7c7c7c;">Jul-21-2002</span>
<span class="t" style="top:94px;left:586.2px;letter-spacing:0.3px;color:#7c7c7c;">Jul-03-2003</span>
<span class="t" style="top:94px;left:685.2px;letter-spacing:0.3px;color:#7c7c7c;">Jul-03-2003</span>
<span class="t" style="top:112px;left:2.3px;letter-spacing:0.4px;color:#7c7c7c;">SP0750-00-D-9715</span>
<span class="t" style="top:112px;left:195.0px;color:#7c7c7c;">$5.2000</span>
<span class="t" style="top:112px;left:308.0px;color:#7c7c7c;">$5.2000</span>
<span class="t" style="top:112px;left:421.0px;color:#7c7c7c;">$5.2000</span>
<span class="t" style="top:112px;left:487.2px;letter-spacing:0.3px;color:#7c7c7c;">Jul-21-2002</span>
<span class="t" style="top:112px;left:583.1px;letter-spacing:0.3px;color:#7c7c7c;">Feb-07-2005</span>
<span class="t" style="top:112px;left:682.1px;letter-spacing:0.3px;color:#7c7c7c;">Feb-07-2005</span>
<span class="t" style="top:130px;left:2.3px;letter-spacing:0.4px;color:#7c7c7c;">SP0750-00-D-9715</span>
<span class="t" style="top:130px;left:195.0px;color:#7c7c7c;">$5.2000</span>
<span class="t" style="top:130px;left:308.0px;color:#7c7c7c;">$5.2000</span>
<span class="t" style="top:130px;left:421.0px;color:#7c7c7c;">$5.2000</span>
<span class="t" style="top:130px;left:487.2px;letter-spacing:0.3px;color:#7c7c7c;">Jul-21-2002</span>
<span class="t" style="top:130px;left:583.1px;letter-spacing:0.3px;color:#7c7c7c;">Feb-07-2005</span>
<span class="t" style="top:130px;left:682.1px;letter-spacing:0.3px;color:#7c7c7c;">Feb-07-2005</span>
</div>
<div style="left:0px;top:0px;width:983px;height:686px;">
<div style="left:224px;top:569px;width:743px;height:131px;background:#000"></div>
<div class="ghead" style="left:225px;top:570px;width:741px;height:17px;"></div>
<span class="t" style="top:574px;left:564.8px;letter-spacing:0.24px;">Line Items</span>
<span class="t" style="top:574px;left:926.7px;letter-spacing:0.3px;">1 of 1</span>
<div class="ghead" style="left:225px;top:588px;width:741px;height:17px;"></div>
<div class="ghead" style="left:225px;top:588px;width:17px;height:17px;"></div>
<svg style="left:227px;top:590px" width="13" height="13" viewBox="0 0 13 13"><rect x=".5" y=".5" width="12" height="12" fill="#fff" stroke="#2a5a98"/><path d="M1 2h11" stroke="#2a5a98" stroke-width="2" stroke-dasharray="2.4 1"/><path d="M2.5 5.5h2M2.5 7.5h2M2.5 9.5h2" stroke="#222" stroke-width="1"/><path d="M5.5 5.5h5M5.5 7.5h5M5.5 9.5h5" stroke="#222" stroke-width="1.2"/></svg>
<div style="left:242px;top:588px;width:1px;height:17px;background:#000"></div>
<div style="left:225px;top:606px;width:729px;height:94px;background:#f9f9f1">
<div style="left:18px;top:0px;width:711px;height:17px;background:#dbe5e8"></div>
<div style="left:18px;top:17px;width:711px;height:1px;background:#c2c2c2"></div>
<div class="gselx" style="left:0px;top:0px;width:17px;height:17px;"></div>
<div style="left:0px;top:17px;width:17px;height:1px;background:#000"></div>
<svg style="left:5.5px;top:3.5px" width="8" height="12" viewBox="0 0 8 12"><path d="M0.3 0.3L7 5.6L0.3 11z" fill="#fff"/></svg>
<div style="left:18px;top:18px;width:711px;height:17px;background:#efede0"></div>
<div style="left:18px;top:35px;width:711px;height:1px;background:#c2c2c2"></div>
<div class="gsel" style="left:0px;top:18px;width:17px;height:17px;"></div>
<div style="left:0px;top:35px;width:17px;height:1px;background:#000"></div>
<div style="left:18px;top:36px;width:711px;height:17px;background:#f9f9f1"></div>
<div style="left:18px;top:53px;width:711px;height:1px;background:#c2c2c2"></div>
<div class="gsel" style="left:0px;top:36px;width:17px;height:17px;"></div>
<div style="left:0px;top:53px;width:17px;height:1px;background:#000"></div>
<div style="left:18px;top:54px;width:711px;height:17px;background:#efede0"></div>
<div style="left:18px;top:71px;width:711px;height:1px;background:#c2c2c2"></div>
<div class="gsel" style="left:0px;top:54px;width:17px;height:17px;"></div>
<div style="left:0px;top:71px;width:17px;height:1px;background:#000"></div>
<div style="left:18px;top:72px;width:711px;height:17px;background:#f9f9f1"></div>
<div style="left:18px;top:89px;width:711px;height:1px;background:#c2c2c2"></div>
<div class="gsel" style="left:0px;top:72px;width:17px;height:17px;"></div>
<div style="left:0px;top:89px;width:17px;height:1px;background:#000"></div>
<div style="left:18px;top:90px;width:711px;height:17px;background:#efede0"></div>
<div style="left:18px;top:107px;width:711px;height:1px;background:#c2c2c2"></div>
<div class="gsel" style="left:0px;top:90px;width:17px;height:17px;"></div>
<div style="left:0px;top:107px;width:17px;height:1px;background:#000"></div>
<div style="left:17px;top:0px;width:1px;height:94px;background:#000"></div>
<div style="left:80px;top:0px;width:1px;height:94px;background:#c2c2c2"></div>
<div style="left:134px;top:0px;width:1px;height:94px;background:#c2c2c2"></div>
<div style="left:233px;top:0px;width:1px;height:94px;background:#c2c2c2"></div>
<div style="left:294px;top:0px;width:1px;height:94px;background:#c2c2c2"></div>
<div style="left:415px;top:0px;width:1px;height:94px;background:#c2c2c2"></div>
<div style="left:448px;top:0px;width:1px;height:94px;background:#c2c2c2"></div>
<div style="left:517px;top:0px;width:1px;height:94px;background:#c2c2c2"></div>
<div style="left:641px;top:0px;width:1px;height:94px;background:#c2c2c2"></div>
<div style="left:712px;top:0px;width:1px;height:94px;background:#c2c2c2"></div>
<div style="left:759px;top:0px;width:1px;height:94px;background:#c2c2c2"></div>
</div>
<div style="left:243px;top:588px;width:711px;height:17px">
<div style="left:61px;top:1px;width:1px;height:14px;background:#6a6a6a"></div>
<div style="left:62px;top:1px;width:1px;height:14px;background:#fafafa"></div>
<span class="t" style="top:4px;left:13.6px;letter-spacing:0.12px;">Call #</span>
<div style="left:115px;top:1px;width:1px;height:14px;background:#6a6a6a"></div>
<div style="left:116px;top:1px;width:1px;height:14px;background:#fafafa"></div>
<span class="t" style="top:4px;left:76.9px;letter-spacing:0.12px;">Line</span>
<div style="left:214px;top:1px;width:1px;height:14px;background:#6a6a6a"></div>
<div style="left:215px;top:1px;width:1px;height:14px;background:#fafafa"></div>
<span class="t" style="top:4px;left:151.7px;letter-spacing:0.12px;">Date</span>
<div style="left:275px;top:1px;width:1px;height:14px;background:#6a6a6a"></div>
<div style="left:276px;top:1px;width:1px;height:14px;background:#fafafa"></div>
<span class="t" style="top:4px;left:230.0px;letter-spacing:0.1px;">CAGE</span>
<div style="left:396px;top:1px;width:1px;height:14px;background:#6a6a6a"></div>
<div style="left:397px;top:1px;width:1px;height:14px;background:#fafafa"></div>
<span class="t" style="top:4px;left:309.1px;letter-spacing:0.12px;">Unit Price</span>
<div style="left:429px;top:1px;width:1px;height:14px;background:#6a6a6a"></div>
<div style="left:430px;top:1px;width:1px;height:14px;background:#fafafa"></div>
<span class="t" style="top:4px;left:407.3px;letter-spacing:0.12px;">UI</span>
<div style="left:498px;top:1px;width:1px;height:14px;background:#6a6a6a"></div>
<div style="left:499px;top:1px;width:1px;height:14px;background:#fafafa"></div>
<span class="t" style="top:4px;left:439.8px;letter-spacing:0.12px;">Quantity</span>
<div style="left:622px;top:1px;width:1px;height:14px;background:#6a6a6a"></div>
<div style="left:623px;top:1px;width:1px;height:14px;background:#fafafa"></div>
<span class="t" style="top:4px;left:534.2px;letter-spacing:0.12px;">Ext. Price</span>
<div style="left:693px;top:1px;width:1px;height:14px;background:#6a6a6a"></div>
<div style="left:694px;top:1px;width:1px;height:14px;background:#fafafa"></div>
<span class="t" style="top:4px;left:638.8px;letter-spacing:0.12px;">Source</span>
<span class="t" style="top:4px;left:697.1px;letter-spacing:0.1px;">ORG</span>
</div>
<div style="left:243px;top:606px;width:711px;height:94px">
<span class="t" style="top:4px;left:13.1px;letter-spacing:0.3px;color:#000;">04VW</span>
<span class="t" style="top:4px;left:73.4px;letter-spacing:0.3px;color:#000;">0001</span>
<span class="t" style="top:4px;left:131.2px;letter-spacing:0.3px;color:#000;">Jul-22-2010</span>
<span class="t" style="top:4px;left:219.1px;letter-spacing:0.3px;color:#000;">02769</span>
<span class="t" style="top:4px;left:346.0px;color:#000;">$5.8900</span>
<span class="t" style="top:4px;left:404.9px;letter-spacing:0.3px;color:#000;">EA</span>
<span class="t" style="top:4px;left:479.2px;letter-spacing:0.3px;color:#000;">52</span>
<span class="t" style="top:4px;left:572.0px;color:#000;">$306.28</span>
<span class="t" style="top:4px;left:645.8px;letter-spacing:0.3px;color:#000;">DLA</span>
<span class="t" style="top:4px;left:706.2px;letter-spacing:0.3px;color:#000;">5A7</span>
</div>
<div style="left:954px;top:196px;width:12px;height:161px;background:#efede0"></div>
<div class="dots" style="left:954px;top:196px;width:12px;height:161px;"></div>
<div class="sbtn" style="left:954px;top:196px;width:12px;height:12px;"></div>
<svg style="left:957px;top:200px" width="6" height="3" viewBox="0 0 6 3"><path d="M0 3L3.0 0L6 3z" fill="#000"/></svg>
<div class="sthumb" style="left:954px;top:208px;width:12px;height:28px;"></div>
<div class="sbtn" style="left:954px;top:304px;width:12px;height:12px;"></div>
<svg style="left:957px;top:309px" width="6" height="3" viewBox="0 0 6 3"><path d="M0 0L6 0L3.0 3z" fill="#000"/></svg>
<div style="left:954px;top:316px;width:12px;height:41px;background:#d0d0d0"></div>
<div class="sbtnd" style="left:954px;top:317px;width:12px;height:17px;"></div>
<svg style="left:957px;top:320px" width="6" height="4" viewBox="0 0 6 4"><path d="M0 4L3.0 0L6 4z" fill="#8c8c8c"/></svg>
<svg style="left:957px;top:326px" width="6" height="4" viewBox="0 0 6 4"><path d="M0 4L3.0 0L6 4z" fill="#8c8c8c"/></svg>
<div style="left:954px;top:334px;width:12px;height:5px;background:#d6d6d6;border-top:1px solid #fff;border-bottom:1px solid #555;border-right:1px solid #555"></div>
<div class="sbtnd" style="left:954px;top:339px;width:12px;height:18px;"></div>
<svg style="left:957px;top:343px" width="6" height="4" viewBox="0 0 6 4"><path d="M0 0L6 0L3.0 4z" fill="#8c8c8c"/></svg>
<svg style="left:957px;top:349px" width="6" height="4" viewBox="0 0 6 4"><path d="M0 0L6 0L3.0 4z" fill="#8c8c8c"/></svg>
<div style="left:954px;top:394px;width:13px;height:161px;background:#f9f9f1"></div>
<div class="dots" style="left:954px;top:394px;width:12px;height:161px;"></div>
<div class="sbtn" style="left:954px;top:394px;width:12px;height:12px;"></div>
<svg style="left:957px;top:398px" width="6" height="3" viewBox="0 0 6 3"><path d="M0 3L3.0 0L6 3z" fill="#000"/></svg>
<div class="sthumb" style="left:954px;top:406px;width:12px;height:27px;"></div>
<div class="sbtn" style="left:954px;top:502px;width:12px;height:12px;"></div>
<svg style="left:957px;top:507px" width="6" height="3" viewBox="0 0 6 3"><path d="M0 0L6 0L3.0 3z" fill="#000"/></svg>
<div style="left:954px;top:514px;width:12px;height:41px;background:#d0d0d0"></div>
<div class="sbtnd" style="left:954px;top:514px;width:12px;height:18px;"></div>
<svg style="left:957px;top:518px" width="6" height="4" viewBox="0 0 6 4"><path d="M0 4L3.0 0L6 4z" fill="#8c8c8c"/></svg>
<svg style="left:957px;top:524px" width="6" height="4" viewBox="0 0 6 4"><path d="M0 4L3.0 0L6 4z" fill="#8c8c8c"/></svg>
<div style="left:954px;top:532px;width:12px;height:5px;background:#d6d6d6;border-top:1px solid #fff;border-bottom:1px solid #555;border-right:1px solid #555"></div>
<div class="sbtnd" style="left:954px;top:537px;width:12px;height:18px;"></div>
<svg style="left:957px;top:541px" width="6" height="4" viewBox="0 0 6 4"><path d="M0 0L6 0L3.0 4z" fill="#8c8c8c"/></svg>
<svg style="left:957px;top:547px" width="6" height="4" viewBox="0 0 6 4"><path d="M0 0L6 0L3.0 4z" fill="#8c8c8c"/></svg>
<div style="left:966px;top:394px;width:1px;height:161px;background:#000"></div>
<div class="dots" style="left:225px;top:543px;width:729px;height:12px;"></div>
<div class="sbtn" style="left:225px;top:543px;width:12px;height:12px;"></div>
<svg style="left:229px;top:546px" width="3" height="6" viewBox="0 0 3 6"><path d="M3 0L3 6L0 3.0z" fill="#000"/></svg>
<div class="sthumb" style="left:237px;top:543px;width:602px;height:12px;"></div>
<div class="sbtn" style="left:942px;top:543px;width:12px;height:12px;"></div>
<svg style="left:947px;top:546px" width="3" height="6" viewBox="0 0 3 6"><path d="M0 0L0 6L3 3.0z" fill="#000"/></svg>
<div class="dots" style="left:954px;top:588px;width:12px;height:153px;"></div>
<div class="sbtn" style="left:954px;top:588px;width:12px;height:12px;"></div>
<svg style="left:957px;top:592px" width="6" height="3" viewBox="0 0 6 3"><path d="M0 3L3.0 0L6 3z" fill="#000"/></svg>
<div class="sthumb" style="left:954px;top:600px;width:12px;height:25px;"></div>
<div class="sbtn" style="left:954px;top:729px;width:12px;height:12px;"></div>
<svg style="left:957px;top:734px" width="6" height="3" viewBox="0 0 6 3"><path d="M0 0L6 0L3.0 3z" fill="#000"/></svg>
</div>
<div style="left:213px;top:686px;width:784px;height:4px;background:#c3c3c3"></div>
<div style="left:213px;top:686px;width:784px;height:1px;background:#d8d8d8"></div>
<div style="left:983px;top:132px;width:13px;height:554px;background:#f9f9f1"></div>
<div class="dots" style="left:983px;top:132px;width:12px;height:554px;"></div>
<div class="sbtn" style="left:983px;top:132px;width:12px;height:12px;"></div>
<svg style="left:986px;top:136px" width="6" height="3" viewBox="0 0 6 3"><path d="M0 3L3.0 0L6 3z" fill="#000"/></svg>
<div class="sthumb" style="left:983px;top:144px;width:12px;height:181px;"></div>
<div class="sbtn" style="left:983px;top:674px;width:12px;height:12px;"></div>
<svg style="left:986px;top:679px" width="6" height="3" viewBox="0 0 6 3"><path d="M0 0L6 0L3.0 3z" fill="#000"/></svg>
<div style="left:213px;top:690px;width:783px;height:24px;border:1px solid #000;background:linear-gradient(#dcdcdc,#cfcfcf 45%,#a6a6a6);box-shadow:inset 0 -1px 0 #8c8c8c"></div>
<span class="t" style="top:696px;left:218.8px;font-size:13px;letter-spacing:-0.02px;color:#101010;">Record</span>
<div class="inp" style="left:343px;top:693px;width:162px;height:19px;"></div>
<span class="t" style="top:697px;left:399.7px;font-size:12px;letter-spacing:-0.46px;">2 of 411</span>
<svg style="left:14.5px;top:30px" width="17" height="16" viewBox="0 0 17 16"><defs><linearGradient id="pp1" x1="0" y1="0" x2="1" y2="1"><stop offset="0" stop-color="#f4faff"/><stop offset="0.5" stop-color="#b8dafc"/><stop offset="1" stop-color="#7ab6f4"/></linearGradient>
<linearGradient id="pl1" x1="0" y1="0" x2="0" y2="1"><stop offset="0" stop-color="#e8e8e8"/><stop offset="1" stop-color="#8c8c8c"/></linearGradient>
<linearGradient id="pt1" x1="0" y1="0" x2="1" y2="1"><stop offset="0" stop-color="#fafafa"/><stop offset="1" stop-color="#b4b4b4"/></linearGradient></defs>
<path d="M0.5 9.4L4 7.6 12 6.4 14.2 6.2 16.4 8.6 16.4 12.6 13 14.2 10 15.6 5 15.4 0.5 11.8z" fill="#c8c8c8" stroke="#56665a" stroke-width="1" stroke-dasharray="1.7 0.8"/>
<path d="M1 9.6L4.4 8 13.8 6.8 15.8 8.8 7 12.4z" fill="url(#pt1)"/>
<path d="M1 9.8L7 12.7 7 15 5 15 1 11.8z" fill="url(#pl1)"/>
<path d="M7.8 12.7L14.4 10.4 14.4 11.7 7.8 14.3z" fill="#080808"/>
<path d="M4.9 8.2L4.9 5.6 4.1 4.5 4.1 2.9 2.8 2.4 2.8 1.3 5.6 0.3 8.4 0.3 9.6 2.3 10.4 5.4 11 6.8 10.6 7.8 8 9z" fill="url(#pp1)" stroke="#6272d2" stroke-width="0.8"/>
<path d="M9.5 14.8l3.2-1.2" stroke="#fff" stroke-width="1.1"/></svg>
<svg style="left:36px;top:31px" width="13" height="14" viewBox="0 0 13 14"><path d="M1 0.5h11l0.5 0.5v12l-0.5 0.5h-10.5l-1-1v-11.5z" fill="#3434b4" stroke="#1c1c8c" stroke-width="1"/>
<rect x="2" y="0" width="9.5" height="7" fill="#fbf6fb"/>
<path d="M3.5 2.5h6.5M3.5 4.5h6.5" stroke="#a8a8a8" stroke-width="1"/>
<rect x="3.2" y="9" width="7" height="4.6" fill="#e4e0e4"/>
<rect x="4.3" y="10" width="1.8" height="3.6" fill="#10107c"/></svg>
<svg style="left:64px;top:30px" width="12" height="16" viewBox="0 0 12 16"><g fill="none" stroke="#8f7f96" stroke-width="1.4">
<circle cx="4" cy="13.1" r="1.9"/><circle cx="9.1" cy="11" r="2"/>
<path d="M5.6 9L4.5 11.3M5.8 9L7.4 10"/></g>
<path d="M0.2 1.8L1.6 2.2 6 8.2 5.2 9.6 4 8.6 0.4 3.6z" fill="#8f7f96"/>
<path d="M4.2 0.2L6.9 1.8 6.9 7.6 5.8 9.6 4.9 8.4 4.6 4z" fill="#8f7f96"/>
<path d="M1.6 3.4L4.4 7.4" stroke="#f4ecf6" stroke-width="0.9" stroke-dasharray="0.9 0.5"/>
<path d="M5.6 2.2L5.7 6.8" stroke="#f0e8f2" stroke-width="0.9"/></svg>
<svg style="left:81px;top:30px" width="15" height="16" viewBox="0 0 15 16"><g stroke="#a8b2a8" stroke-width="0.9" fill="#f6eef6">
<path d="M0.5 0.5h6l3 3v8h-9z"/><path d="M6.5 0.5v3h3" fill="#dcd4dc"/>
<path d="M5.3 4.5h6l3 3v8h-9z"/><path d="M11.3 4.5v3h3" fill="#dcd4dc"/></g>
<path d="M2 4.5h3M2 6.5h3M2 8.5h3M7 9.5h5.6M7 11.5h5.6M7 13.5h5.6" stroke="#a8a4a8" stroke-width="1"/></svg>
<svg style="left:102px;top:30px" width="14" height="16" viewBox="0 0 14 16"><path d="M0.5 2.7h13v12.8h-13z" fill="#dcd6dc" stroke="#9a8a9e" stroke-width="1"/>
<path d="M3.6 3.6v-2.2h1.6l0.6-1h2.6l0.6 1h1.6v2.2z" fill="#ece6ec" stroke="#9a8a9e" stroke-width="0.9"/>
<path d="M5.5 6.5h5l3 3v6h-8z" fill="#fbf8fb" stroke="#a49ca6" stroke-width="0.9"/>
<path d="M7 10.5h5M7 12.5h5M7 14.2h5" stroke="#a8a4a8" stroke-width="0.9"/></svg>
<svg style="left:121.5px;top:30px" width="16" height="16" viewBox="0 0 16 16"><rect x="0.5" y="0.7" width="8.6" height="7.8" fill="#dadada" stroke="#9a9a9a" stroke-width="0.9"/>
<rect x="1.8" y="2" width="6" height="4.8" fill="#4070d4"/><path d="M1.8 2h6v1.6h-6z" fill="#6a94e4"/>
<path d="M2.4 12c1-1.4 3.6-1.4 4.6 0z" fill="#c4c4c4" stroke="#8e8e8e" stroke-width="0.6"/><rect x="4" y="8.8" width="1.4" height="2.2" fill="#a8a8a8"/>
<path d="M9.6 1.6c2.8-0.6 4 0.6 3.9 3" fill="none" stroke="#1c3870" stroke-width="1.3"/><path d="M11.6 4.2h3.8l-1.9 2.4z" fill="#1c3870"/>
<path d="M8.5 7.8h4.2l2.8 2.8v5.1h-7z" fill="#fff" stroke="#16264e" stroke-width="1"/>
<path d="M10 10.6h2.2M10 12.4h4M10 14.1h4" stroke="#000" stroke-width="1.1"/></svg>
<svg style="left:148px;top:29px" width="15" height="17" viewBox="0 0 15 17"><defs><linearGradient id="ds1" x1="0" y1="0" x2="1" y2="1"><stop offset="0.25" stop-color="#ffffff"/><stop offset="0.55" stop-color="#c4e2fa"/><stop offset="1" stop-color="#84c0f0"/></linearGradient></defs>
<path d="M1.5 1h9.5l3 3.2v12.3h-12.5z" fill="url(#ds1)" stroke="#5470d0" stroke-width="1"/>
<path d="M11 1v3.2h3z" fill="#4a80e0" stroke="#5470d0" stroke-width="0.6"/>
<path d="M5 11L0.8 15" stroke="#f09010" stroke-width="2.2" stroke-linecap="round"/>
<circle cx="7.5" cy="8.2" r="3" fill="#f2f8ff" fill-opacity="0.9" stroke="#6868a8" stroke-width="1"/></svg>
<svg style="left:238px;top:29px" width="15" height="17" viewBox="0 0 15 17"><defs><linearGradient id="ds2" x1="0" y1="0" x2="1" y2="1"><stop offset="0.25" stop-color="#ffffff"/><stop offset="0.55" stop-color="#c4e2fa"/><stop offset="1" stop-color="#84c0f0"/></linearGradient></defs>
<path d="M1.5 1h9.5l3 3.2v12.3h-12.5z" fill="url(#ds2)" stroke="#5470d0" stroke-width="1"/>
<path d="M11 1v3.2h3z" fill="#4a80e0" stroke="#5470d0" stroke-width="0.6"/>
<path d="M5 11L0.8 15" stroke="#f09010" stroke-width="2.2" stroke-linecap="round"/>
<circle cx="7.5" cy="8.2" r="3" fill="#f2f8ff" fill-opacity="0.9" stroke="#6868a8" stroke-width="1"/></svg>
<svg style="left:301.5px;top:30px" width="17" height="16" viewBox="0 0 17 16"><defs><linearGradient id="pp2" x1="0" y1="0" x2="1" y2="1"><stop offset="0" stop-color="#f4faff"/><stop offset="0.5" stop-color="#b8dafc"/><stop offset="1" stop-color="#7ab6f4"/></linearGradient>
<linearGradient id="pl2" x1="0" y1="0" x2="0" y2="1"><stop offset="0" stop-color="#e8e8e8"/><stop offset="1" stop-color="#8c8c8c"/></linearGradient>
<linearGradient id="pt2" x1="0" y1="0" x2="1" y2="1"><stop offset="0" stop-color="#fafafa"/><stop offset="1" stop-color="#b4b4b4"/></linearGradient></defs>
<path d="M0.5 9.4L4 7.6 12 6.4 14.2 6.2 16.4 8.6 16.4 12.6 13 14.2 10 15.6 5 15.4 0.5 11.8z" fill="#c8c8c8" stroke="#56665a" stroke-width="1" stroke-dasharray="1.7 0.8"/>
<path d="M1 9.6L4.4 8 13.8 6.8 15.8 8.8 7 12.4z" fill="url(#pt2)"/>
<path d="M1 9.8L7 12.7 7 15 5 15 1 11.8z" fill="url(#pl2)"/>
<path d="M7.8 12.7L14.4 10.4 14.4 11.7 7.8 14.3z" fill="#080808"/>
<path d="M4.9 8.2L4.9 5.6 4.1 4.5 4.1 2.9 2.8 2.4 2.8 1.3 5.6 0.3 8.4 0.3 9.6 2.3 10.4 5.4 11 6.8 10.6 7.8 8 9z" fill="url(#pp2)" stroke="#6272d2" stroke-width="0.8"/>
<path d="M9.5 14.8l3.2-1.2" stroke="#fff" stroke-width="1.1"/></svg>
<svg style="left:409px;top:29px" width="15" height="17" viewBox="0 0 15 17"><defs><linearGradient id="ds3" x1="0" y1="0" x2="1" y2="1"><stop offset="0.25" stop-color="#ffffff"/><stop offset="0.55" stop-color="#c4e2fa"/><stop offset="1" stop-color="#84c0f0"/></linearGradient></defs>
<path d="M1.5 1h9.5l3 3.2v12.3h-12.5z" fill="url(#ds3)" stroke="#5470d0" stroke-width="1"/>
<path d="M11 1v3.2h3z" fill="#4a80e0" stroke="#5470d0" stroke-width="0.6"/>
<path d="M5 11L0.8 15" stroke="#f09010" stroke-width="2.2" stroke-linecap="round"/>
<circle cx="7.5" cy="8.2" r="3" fill="#f2f8ff" fill-opacity="0.9" stroke="#6868a8" stroke-width="1"/></svg>
<svg style="left:934px;top:30px" width="16" height="16" viewBox="0 0 16 16"><defs><linearGradient id="pw" x1="0" y1="0" x2="0" y2="1"><stop offset="0" stop-color="#5474e0"/><stop offset="0.35" stop-color="#1c34b0"/><stop offset="0.6" stop-color="#060a40"/><stop offset="0.8" stop-color="#1c4cc0"/><stop offset="1" stop-color="#4c94f0"/></linearGradient></defs>
<circle cx="8" cy="8" r="7.6" fill="url(#pw)"/><circle cx="8" cy="8" r="7.2" fill="none" stroke="#8098e8" stroke-opacity="0.5" stroke-width="0.8"/>
<path d="M5.6 5.2a4 4 0 1 0 4.8 0" fill="none" stroke="#fff" stroke-width="1.5" stroke-linecap="round"/><path d="M8 3.4v4.4" stroke="#fff" stroke-width="1.5" stroke-linecap="round"/></svg>
<div style="left:14px;top:136px;width:186px;height:193px">
<svg style="left:3px;top:4px" width="16" height="15" viewBox="0 0 16 15"><defs><linearGradient id="fs1" x1="0" y1="0" x2="0" y2="1"><stop offset="0" stop-color="#fff4c0"/><stop offset="1" stop-color="#f0cc60"/></linearGradient></defs>
<path d="M0.5 1.5l1-1h4l1.2 1.5h6.8v9.5h-13z" fill="url(#fs1)" stroke="#c8a040" stroke-width="0.9"/>
<path d="M12.4 10.8L15 14" stroke="#e08818" stroke-width="2.2" stroke-linecap="round"/>
<circle cx="9.4" cy="7.8" r="3.4" fill="#eef4ff" stroke="#7a84a8" stroke-width="1.1"/>
</svg>
<svg style="left:3px;top:26px" width="16" height="15" viewBox="0 0 16 15"><defs><linearGradient id="fs2" x1="0" y1="0" x2="0" y2="1"><stop offset="0" stop-color="#fff4c0"/><stop offset="1" stop-color="#f0cc60"/></linearGradient></defs>
<path d="M0.5 1.5l1-1h4l1.2 1.5h6.8v9.5h-13z" fill="url(#fs2)" stroke="#c8a040" stroke-width="0.9"/>
<path d="M12.4 10.8L15 14" stroke="#e08818" stroke-width="2.2" stroke-linecap="round"/>
<circle cx="9.4" cy="7.8" r="3.4" fill="#eef4ff" stroke="#7a84a8" stroke-width="1.1"/>
</svg>
<svg style="left:3px;top:48px" width="16" height="15" viewBox="0 0 16 15"><defs><linearGradient id="fs3" x1="0" y1="0" x2="0" y2="1"><stop offset="0" stop-color="#fff4c0"/><stop offset="1" stop-color="#f0cc60"/></linearGradient></defs>
<path d="M0.5 1.5l1-1h4l1.2 1.5h6.8v9.5h-13z" fill="url(#fs3)" stroke="#c8a040" stroke-width="0.9"/>
<path d="M12.4 10.8L15 14" stroke="#e08818" stroke-width="2.2" stroke-linecap="round"/>
<circle cx="9.4" cy="7.8" r="3.4" fill="#eef4ff" stroke="#7a84a8" stroke-width="1.1"/>
</svg>
<svg style="left:3px;top:70px" width="16" height="15" viewBox="0 0 16 15"><defs><linearGradient id="fs4" x1="0" y1="0" x2="0" y2="1"><stop offset="0" stop-color="#fff4c0"/><stop offset="1" stop-color="#f0cc60"/></linearGradient></defs>
<path d="M0.5 1.5l1-1h4l1.2 1.5h6.8v9.5h-13z" fill="url(#fs4)" stroke="#c8a040" stroke-width="0.9"/>
<path d="M12.4 10.8L15 14" stroke="#e08818" stroke-width="2.2" stroke-linecap="round"/>
<circle cx="9.4" cy="7.8" r="3.4" fill="#eef4ff" stroke="#7a84a8" stroke-width="1.1"/>
</svg>
<svg style="left:3px;top:92px" width="16" height="15" viewBox="0 0 16 15"><defs><linearGradient id="fs5" x1="0" y1="0" x2="0" y2="1"><stop offset="0" stop-color="#fff4c0"/><stop offset="1" stop-color="#f0cc60"/></linearGradient></defs>
<path d="M0.5 1.5l1-1h4l1.2 1.5h6.8v9.5h-13z" fill="url(#fs5)" stroke="#c8a040" stroke-width="0.9"/>
<path d="M12.4 10.8L15 14" stroke="#e08818" stroke-width="2.2" stroke-linecap="round"/>
<circle cx="9.4" cy="7.8" r="3.4" fill="#eef4ff" stroke="#7a84a8" stroke-width="1.1"/>
</svg>
<svg style="left:3px;top:114px" width="16" height="15" viewBox="0 0 16 15"><defs><linearGradient id="fs6" x1="0" y1="0" x2="0" y2="1"><stop offset="0" stop-color="#fff4c0"/><stop offset="1" stop-color="#f0cc60"/></linearGradient></defs>
<path d="M0.5 1.5l1-1h4l1.2 1.5h6.8v9.5h-13z" fill="url(#fs6)" stroke="#c8a040" stroke-width="0.9"/>
<path d="M12.4 10.8L15 14" stroke="#e08818" stroke-width="2.2" stroke-linecap="round"/>
<circle cx="9.4" cy="7.8" r="3.4" fill="#eef4ff" stroke="#7a84a8" stroke-width="1.1"/>
</svg>
<svg style="left:3px;top:136px" width="16" height="15" viewBox="0 0 16 15"><defs><linearGradient id="fs7" x1="0" y1="0" x2="0" y2="1"><stop offset="0" stop-color="#fff4c0"/><stop offset="1" stop-color="#f0cc60"/></linearGradient></defs>
<path d="M0.5 1.5l1-1h4l1.2 1.5h6.8v9.5h-13z" fill="url(#fs7)" stroke="#c8a040" stroke-width="0.9"/>
<path d="M12.4 10.8L15 14" stroke="#e08818" stroke-width="2.2" stroke-linecap="round"/>
<circle cx="9.4" cy="7.8" r="3.4" fill="#eef4ff" stroke="#7a84a8" stroke-width="1.1"/>
</svg>
<svg style="left:3px;top:158px" width="16" height="15" viewBox="0 0 16 15"><defs><linearGradient id="fs8" x1="0" y1="0" x2="0" y2="1"><stop offset="0" stop-color="#fff4c0"/><stop offset="1" stop-color="#f0cc60"/></linearGradient></defs>
<path d="M0.5 1.5l1-1h4l1.2 1.5h6.8v9.5h-13z" fill="url(#fs8)" stroke="#c8a040" stroke-width="0.9"/>
<path d="M12.4 10.8L15 14" stroke="#e08818" stroke-width="2.2" stroke-linecap="round"/>
<circle cx="9.4" cy="7.8" r="3.4" fill="#eef4ff" stroke="#7a84a8" stroke-width="1.1"/>
</svg>
<svg style="left:3px;top:180px" width="16" height="15" viewBox="0 0 16 15"><defs><linearGradient id="fs9" x1="0" y1="0" x2="0" y2="1"><stop offset="0" stop-color="#fff4c0"/><stop offset="1" stop-color="#f0cc60"/></linearGradient></defs>
<path d="M0.5 1.5l1-1h4l1.2 1.5h6.8v9.5h-13z" fill="url(#fs9)" stroke="#c8a040" stroke-width="0.9"/>
<path d="M12.4 10.8L15 14" stroke="#e08818" stroke-width="2.2" stroke-linecap="round"/>
<circle cx="9.4" cy="7.8" r="3.4" fill="#eef4ff" stroke="#7a84a8" stroke-width="1.1"/>
</svg>
</div>
<svg style="left:226px;top:284px" width="15" height="11" viewBox="0 0 15 11"><rect x="0" y="0" width="15" height="11" fill="#fff"/>
<path d="M0 0.5h15M0 2.5h15M0 4.5h15M0 6.5h15M0 8.5h15M0 10.5h15" stroke="#d02030" stroke-width="1"/>
<rect x="0" y="0" width="7" height="6" fill="#30408c"/>
<path d="M1 1.5h5M1 3h5M1 4.5h5" stroke="#c8d0f0" stroke-width="0.6" stroke-dasharray="0.8 0.8"/></svg>
<svg style="left:227px;top:334px" width="13" height="13" viewBox="0 0 13 13"><circle cx="6.5" cy="6.5" r="6.2" fill="#4a8a66" stroke="#9cc0aa" stroke-width="0.7"/>
<path d="M4.8 10V3.4h2.4a1.9 1.9 0 0 1 0 3.9H4.8" fill="none" stroke="#fff" stroke-width="1.5"/></svg>
<div style="left:227px;top:350px;width:16px;height:7px"><svg style="left:0px;top:1px" width="13" height="13" viewBox="0 0 13 13"><circle cx="6.5" cy="6.5" r="6.2" fill="#4a8a66" stroke="#9cc0aa" stroke-width="0.7"/>
<path d="M4.8 10V3.4h2.4a1.9 1.9 0 0 1 0 3.9H4.8" fill="none" stroke="#fff" stroke-width="1.5"/></svg></div>
<svg style="left:270px;top:693px" width="17" height="17" viewBox="0 0 17 17"><defs><radialGradient id="nb1" cx="0.5" cy="0.68" r="0.62"><stop offset="0" stop-color="#fafafa"/><stop offset="0.55" stop-color="#b4b4b4"/><stop offset="1" stop-color="#5c5c5c"/></radialGradient></defs>
<circle cx="8.5" cy="8.5" r="8.2" fill="#303030"/><circle cx="8.5" cy="8.5" r="6.9" fill="url(#nb1)"/><path d="M5.4 5.2v6.6" stroke="#0a0a0a" stroke-width="1.5"/><path d="M11.4 4.8l-4.8 3.7 4.8 3.7z" fill="#0a0a0a"/></svg>
<svg style="left:295px;top:693px" width="17" height="17" viewBox="0 0 17 17"><defs><radialGradient id="nb2" cx="0.5" cy="0.68" r="0.62"><stop offset="0" stop-color="#8c8c8c"/><stop offset="0.6" stop-color="#585858"/><stop offset="1" stop-color="#2c2c2c"/></radialGradient></defs>
<circle cx="8.5" cy="8.5" r="8.2" fill="#303030"/><circle cx="8.5" cy="8.5" r="6.9" fill="url(#nb2)"/><path d="M8.4 4.8l-4.6 3.7 4.6 3.7z" fill="#c4c4c4"/><path d="M12.8 4.8l-4.6 3.7 4.6 3.7z" fill="#c4c4c4"/></svg>
<svg style="left:320px;top:693px" width="17" height="17" viewBox="0 0 17 17"><defs><radialGradient id="nb3" cx="0.5" cy="0.68" r="0.62"><stop offset="0" stop-color="#fafafa"/><stop offset="0.55" stop-color="#b4b4b4"/><stop offset="1" stop-color="#5c5c5c"/></radialGradient></defs>
<circle cx="8.5" cy="8.5" r="8.2" fill="#303030"/><circle cx="8.5" cy="8.5" r="6.9" fill="url(#nb3)"/><path d="M11 4.4l-5.4 4.1 5.4 4.1z" fill="#0a0a0a"/></svg>
<svg style="left:510px;top:693px" width="17" height="17" viewBox="0 0 17 17"><defs><radialGradient id="nb4" cx="0.5" cy="0.68" r="0.62"><stop offset="0" stop-color="#fafafa"/><stop offset="0.55" stop-color="#b4b4b4"/><stop offset="1" stop-color="#5c5c5c"/></radialGradient></defs>
<circle cx="8.5" cy="8.5" r="8.2" fill="#303030"/><circle cx="8.5" cy="8.5" r="6.9" fill="url(#nb4)"/><path d="M6.2 4.4l5.4 4.1-5.4 4.1z" fill="#0a0a0a"/></svg>
<svg style="left:535px;top:693px" width="17" height="17" viewBox="0 0 17 17"><defs><radialGradient id="nb5" cx="0.5" cy="0.68" r="0.62"><stop offset="0" stop-color="#fafafa"/><stop offset="0.55" stop-color="#b4b4b4"/><stop offset="1" stop-color="#5c5c5c"/></radialGradient></defs>
<circle cx="8.5" cy="8.5" r="8.2" fill="#303030"/><circle cx="8.5" cy="8.5" r="6.9" fill="url(#nb5)"/><path d="M4.2 4.8l4.6 3.7-4.6 3.7z" fill="#0a0a0a"/><path d="M8.6 4.8l4.6 3.7-4.6 3.7z" fill="#0a0a0a"/></svg>
<svg style="left:560px;top:693px" width="17" height="17" viewBox="0 0 17 17"><defs><radialGradient id="nb6" cx="0.5" cy="0.68" r="0.62"><stop offset="0" stop-color="#fafafa"/><stop offset="0.55" stop-color="#b4b4b4"/><stop offset="1" stop-color="#5c5c5c"/></radialGradient></defs>
<circle cx="8.5" cy="8.5" r="8.2" fill="#303030"/><circle cx="8.5" cy="8.5" r="6.9" fill="url(#nb6)"/><path d="M11.6 5.2v6.6" stroke="#0a0a0a" stroke-width="1.5"/><path d="M5.6 4.8l4.8 3.7-4.8 3.7z" fill="#0a0a0a"/></svg>
<svg style="left:978px;top:695px" width="13" height="13" viewBox="0 0 13 13"><defs><linearGradient id="ld" x1="0" y1="0" x2="0" y2="1"><stop offset="0" stop-color="#0a5020"/><stop offset="0.5" stop-color="#168838"/><stop offset="1" stop-color="#30b458"/></linearGradient>
<linearGradient id="lr" x1="0" y1="0" x2="1" y2="1"><stop offset="0.2" stop-color="#4c4c4c"/><stop offset="0.55" stop-color="#8a8a8a"/><stop offset="0.85" stop-color="#f0f0f0"/></linearGradient></defs>
<circle cx="6.6" cy="6.6" r="6.4" fill="url(#lr)"/><circle cx="6.5" cy="6.4" r="4.3" fill="url(#ld)" stroke="#1a3020" stroke-width="0.8"/><circle cx="5.6" cy="5.4" r="0.8" fill="#f0fff0"/></svg>
<svg style="left:45px;top:388px" width="9" height="9" viewBox="0 0 9 9"><path d="M1 3.3L3.3 5.8 8 1" fill="none" stroke="#000" stroke-width="2.2"/></svg>
<svg style="left:44px;top:482.5px" width="12" height="12" viewBox="0 0 12 12"><circle cx="5.7" cy="5.7" r="4.8" fill="#fff" stroke="#d4d4d4" stroke-width="1"/><path d="M2.1 9.1A4.8 4.8 0 0 1 9.1 2.1" fill="none" stroke="#303030" stroke-width="1.3"/><circle cx="5.7" cy="5.7" r="2" fill="#000"/></svg>
<svg style="left:44px;top:500.5px" width="12" height="12" viewBox="0 0 12 12"><circle cx="5.7" cy="5.7" r="4.8" fill="#fff" stroke="#d4d4d4" stroke-width="1"/><path d="M2.1 9.1A4.8 4.8 0 0 1 9.1 2.1" fill="none" stroke="#303030" stroke-width="1.3"/></svg>
<svg style="left:44px;top:518.5px" width="12" height="12" viewBox="0 0 12 12"><circle cx="5.7" cy="5.7" r="4.8" fill="#fff" stroke="#d4d4d4" stroke-width="1"/><path d="M2.1 9.1A4.8 4.8 0 0 1 9.1 2.1" fill="none" stroke="#303030" stroke-width="1.3"/></svg>
<svg style="left:44px;top:536.5px" width="12" height="12" viewBox="0 0 12 12"><circle cx="5.7" cy="5.7" r="4.8" fill="#fff" stroke="#d4d4d4" stroke-width="1"/><path d="M2.1 9.1A4.8 4.8 0 0 1 9.1 2.1" fill="none" stroke="#303030" stroke-width="1.3"/></svg>
<div style="left:0px;top:717px;width:1000px;height:1px;background:#bcbcbc"></div>
<div style="left:0px;top:718px;width:1000px;height:1px;background:#f6f6f6"></div>
<div style="left:0px;top:719px;width:1000px;height:1px;background:#d0d0d0"></div>
</div></body></html>
